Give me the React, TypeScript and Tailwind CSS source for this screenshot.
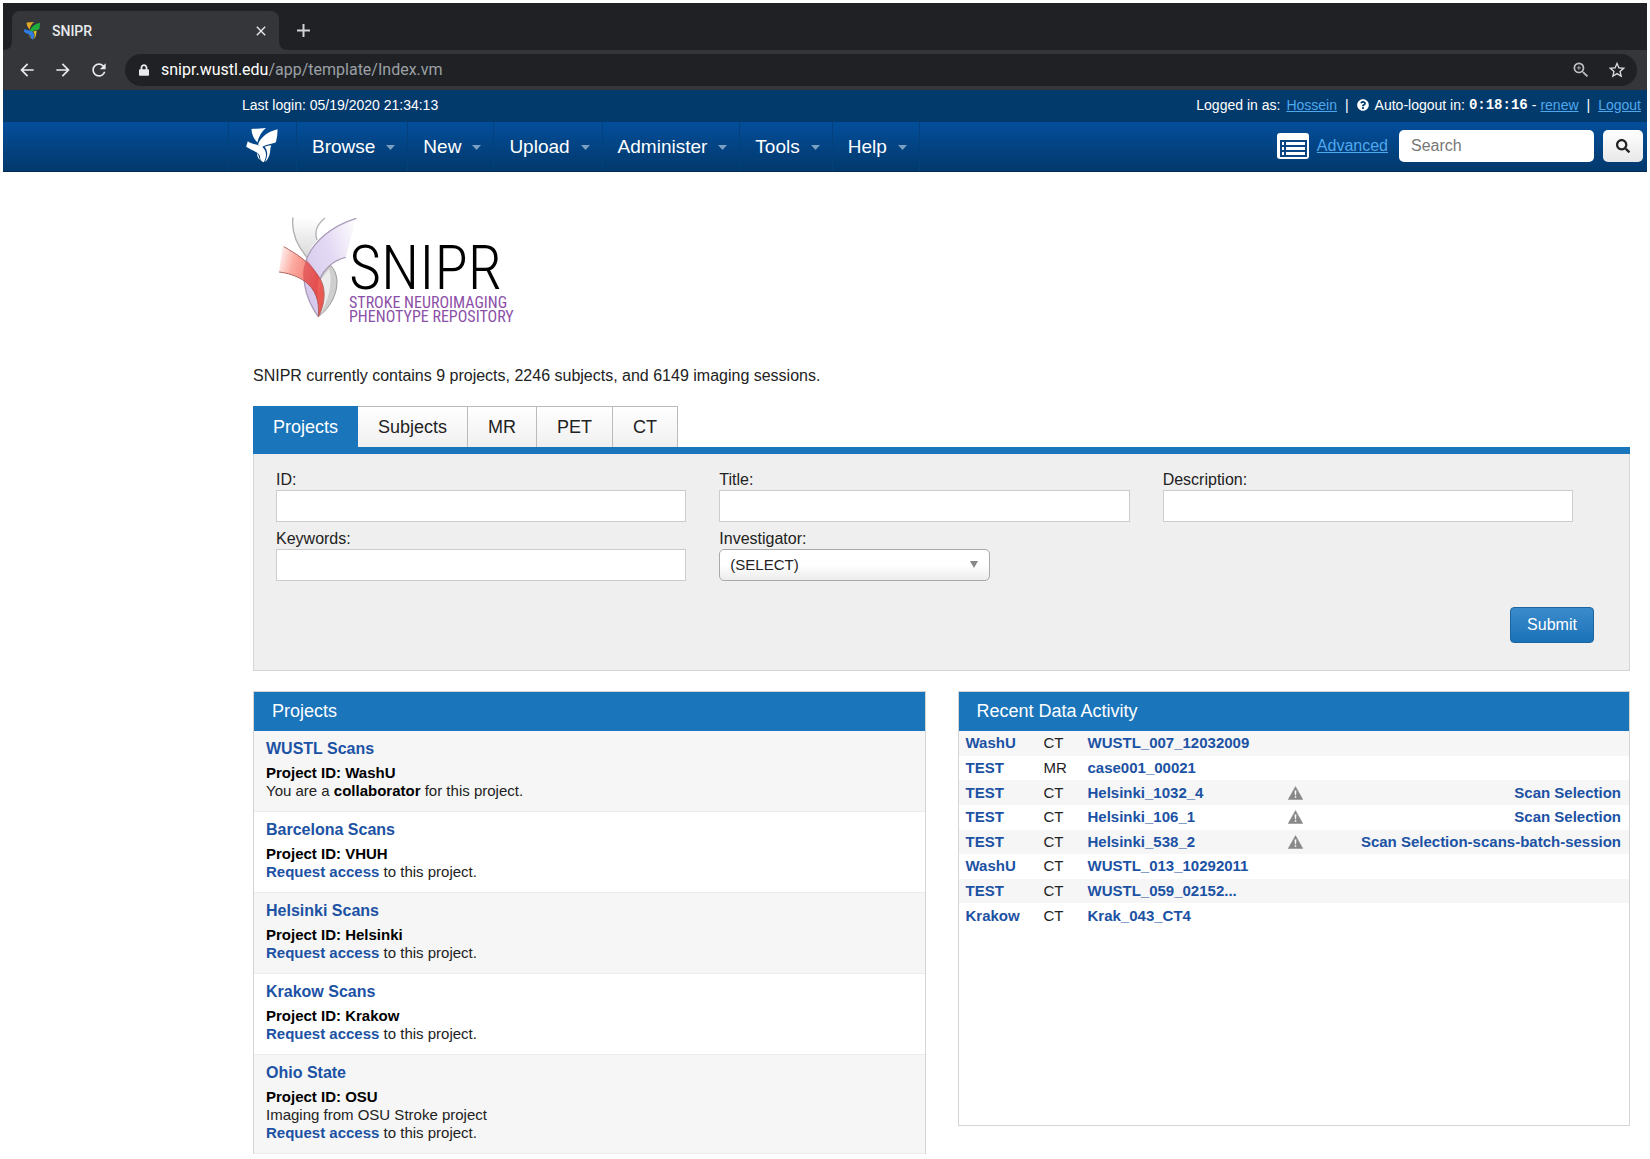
import { ReactNode } from 'react';
import { FaLock, FaQuestionCircle, FaSearch } from 'react-icons/fa';
import { MdArrowBack, MdArrowForward, MdClose, MdRefresh, MdStarBorder, MdZoomIn } from 'react-icons/md';

interface Project {
  title: string;
  id: string;
  description?: string;
  role?: string;
}

interface Activity {
  project: string;
  type: string;
  label: string;
  action?: string;
}

const MENUS = ['Browse', 'New', 'Upload', 'Administer', 'Tools', 'Help'];

const TABS = ['Projects', 'Subjects', 'MR', 'PET', 'CT'];

const PROJECTS: Project[] = [
  { title: 'WUSTL Scans', id: 'WashU', role: 'collaborator' },
  { title: 'Barcelona Scans', id: 'VHUH' },
  { title: 'Helsinki Scans', id: 'Helsinki' },
  { title: 'Krakow Scans', id: 'Krakow' },
  { title: 'Ohio State', id: 'OSU', description: 'Imaging from OSU Stroke project' },
];

const ACTIVITY: Activity[] = [
  { project: 'WashU', type: 'CT', label: 'WUSTL_007_12032009' },
  { project: 'TEST', type: 'MR', label: 'case001_00021' },
  { project: 'TEST', type: 'CT', label: 'Helsinki_1032_4', action: 'Scan Selection' },
  { project: 'TEST', type: 'CT', label: 'Helsinki_106_1', action: 'Scan Selection' },
  { project: 'TEST', type: 'CT', label: 'Helsinki_538_2', action: 'Scan Selection-scans-batch-session' },
  { project: 'WashU', type: 'CT', label: 'WUSTL_013_10292011' },
  { project: 'TEST', type: 'CT', label: 'WUSTL_059_02152...' },
  { project: 'Krakow', type: 'CT', label: 'Krak_043_CT4' },
];

function XnatMark({ className, colors }: { className: string; colors: string[] }) {
  return (
    <svg viewBox="0 0 96 106" className={className} aria-hidden="true">
      <path fill={colors[0]} d="M16 3 C30 2 46 2 60 0 C46 12 38 26 34 44 C22 32 17 18 16 3Z" />
      <path fill={colors[1]} d="M95 4 C70 10 44 26 36 50 L46 60 C58 48 76 50 90 43 C94 30 95 16 95 4Z" />
      <path fill={colors[2]} d="M5 40 C16 50 34 48 50 58 C64 70 62 90 53 104 C46 102 42 96 42 88 C42 74 20 70 0 57Z" />
      <path fill={colors[3]} d="M56 57 C62 53 70 53 76 52 C72 62 74 70 71 80 C68 90 63 98 57 103 C65 88 67 70 56 57Z" />
      <path fill={colors[3]} d="M33 76 C38 80 38 88 42 97 C36 93 33 85 33 76Z" />
    </svg>
  );
}

function SniprMark() {
  return (
    <svg viewBox="84 40 216 320" className="w-[72px] shrink-0 overflow-visible" aria-hidden="true">
      <defs>
        <linearGradient id="petalGray" x1="0" y1="0" x2="0" y2="1">
          <stop offset="0" stopColor="#ffffff" />
          <stop offset="1" stopColor="#d9d9d9" />
        </linearGradient>
        <linearGradient id="petalLilac" x1="1" y1="0" x2="0" y2="0.6">
          <stop offset="0" stopColor="#ffffff" />
          <stop offset="0.5" stopColor="#e0d4f2" />
          <stop offset="1" stopColor="#cfc0ea" />
        </linearGradient>
        <linearGradient id="petalRed" x1="0" y1="0" x2="1" y2="0.4">
          <stop offset="0" stopColor="#ffffff" />
          <stop offset="0.35" stopColor="#fb9c90" />
          <stop offset="1" stopColor="#ee4438" />
        </linearGradient>
      </defs>
      <path d="M132 50 C126 95 142 132 174 170 C181 150 190 134 204 118 C196 95 202 72 228 52Z" fill="url(#petalGray)" />
      <path d="M132 50 C126 95 142 132 174 170 M204 118 C196 95 202 72 228 52" fill="none" stroke="#b0b0b4" strokeWidth="4" />
      <path d="M208 348 C240 324 266 285 264 238 C262 220 256 206 246 195 C228 206 214 222 210 240 C226 270 220 315 208 348Z" fill="#cfcfcf" stroke="#9c9c9c" strokeWidth="3" />
      <path d="M240 206 C252 245 240 300 210 346 C226 300 224 270 212 240Z" fill="#ececec" />
      <path d="M322 53 C250 75 195 120 174 172 C155 220 165 290 208 348 C222 310 224 270 212 238 C222 200 250 180 290 170Z" fill="url(#petalLilac)" fillOpacity="0.85" />
      <path d="M322 53 C250 75 195 120 174 172 C155 220 165 290 208 348 M290 170 C250 180 225 205 212 238" fill="none" stroke="#ab9cba" strokeWidth="4" />
      <path d="M100 138 C140 158 180 182 208 226 C234 262 228 310 208 348 C212 300 200 265 165 240 C140 224 115 217 90 214Z" fill="url(#petalRed)" fillOpacity="0.85" />
      <path d="M104 138 C140 158 180 182 208 226 C234 262 228 310 208 348 C212 300 200 265 165 240 C140 224 115 217 90 214" fill="none" stroke="#b0605c" strokeWidth="3" />
      <path d="M174 178 C160 205 162 225 165 240 C188 256 200 276 206 300 C204 270 206 250 210 230 C200 212 188 194 174 178Z" fill="#d8303a" fillOpacity="0.4" />
    </svg>
  );
}

function ListIcon() {
  return (
    <svg viewBox="0 0 32 26" className="w-8 h-[26px] shrink-0" aria-hidden="true">
      <rect width="32" height="26" rx="3" fill="#fff" />
      <path d="M3 7h27v17H3z" fill="#0a4583" />
      <path d="M5 9h2v3H5zM9 9h19v3H9zM5 14h2v3H5zM9 14h19v3H9zM5 19h2v3H5zM9 19h19v3H9z" fill="#fff" />
    </svg>
  );
}

function WarningIcon() {
  return (
    <svg viewBox="0 0 15 14" className="w-[15px] h-[14px]" role="img" aria-label="Warning">
      <path d="M7.5 0.5 L14.8 13.5 H0.2Z" fill="#888" stroke="#888" strokeWidth="0.5" strokeLinejoin="round" />
      <path d="M6.6 4.6h1.8l-0.3 4.6h-1.2zM6.7 10.2h1.6v1.6h-1.6z" fill="#fff" />
    </svg>
  );
}

function BrowserChrome() {
  return (
    <div className="bg-[#202124] font-['Roboto',sans-serif] text-[#e8eaed]">
      <div className="flex h-[47px] items-end">
        <svg viewBox="0 0 9 9" className="w-[9px] h-[9px]" aria-hidden="true">
          <path d="M9 0 Q9 9 0 9 H9Z" fill="#35363a" />
        </svg>
        <div className="flex items-center w-[267px] h-[39px] px-[10px] rounded-t-lg bg-[#35363a]">
          <XnatMark className="w-5 h-[18px]" colors={['#e0a92a', '#1fae3c', '#2f7de0', '#e3c62d']} />
          <span className="ml-[10px] flex-1 text-sm font-medium">SNIPR</span>
          <button aria-label="Close tab">
            <MdClose className="w-4 h-4" />
          </button>
        </div>
        <svg viewBox="0 0 9 9" className="w-[9px] h-[9px]" aria-hidden="true">
          <path d="M0 0 Q0 9 9 9 H0Z" fill="#35363a" />
        </svg>
        <button aria-label="New tab" className="ml-2 h-10 flex items-center">
          <svg viewBox="0 0 15 15" className="w-[15px] h-[15px]" aria-hidden="true">
            <path d="M7.5 1v13M1 7.5h13" stroke="#d0d2d6" strokeWidth="2" />
          </svg>
        </button>
      </div>
      <div className="flex h-10 items-center bg-[#35363a] pl-[14px] pr-[10px]">
        <button aria-label="Back"><MdArrowBack className="w-5 h-5" /></button>
        <button aria-label="Forward" className="ml-4"><MdArrowForward className="w-5 h-5" /></button>
        <button aria-label="Reload" className="ml-4"><MdRefresh className="w-5 h-5" /></button>
        <div className="ml-4 flex flex-1 h-8 items-center rounded-full bg-[#202124] pl-[14px] pr-[10px] text-base">
          <FaLock className="w-[10px] h-3" />
          <span className="ml-3 text-white">snipr.wustl.edu</span>
          <span className="flex-1 text-[#9aa0a6]">/app/template/Index.vm</span>
          <button aria-label="Zoom"><MdZoomIn className="w-5 h-5 text-[#bdc1c6]" /></button>
          <button aria-label="Bookmark" className="ml-4"><MdStarBorder className="w-5 h-5 text-[#dadce0]" /></button>
        </div>
      </div>
    </div>
  );
}

function TopLink({ children }: { children: ReactNode }) {
  return <a href="#" className="text-[#4fa8ee] underline">{children}</a>;
}

function UserBar() {
  return (
    <div className="flex h-8 items-center justify-between bg-[#033a6c] pl-[239px] pr-1.5 pb-0.5 text-sm text-white">
      <span>Last login: 05/19/2020 21:34:13</span>
      <div className="flex items-center">
        <span className="mr-1.5">Logged in as:</span>
        <TopLink>Hossein</TopLink>
        <span className="mx-2">|</span>
        <FaQuestionCircle className="w-3 h-3 mr-1.5" />
        <span>Auto-logout in:</span>
        <span className="mx-1 font-['Liberation_Mono',monospace] font-bold">0:18:16</span>
        <span className="mr-1">-</span>
        <TopLink>renew</TopLink>
        <span className="mx-2">|</span>
        <TopLink>Logout</TopLink>
      </div>
    </div>
  );
}

function NavBar() {
  return (
    <nav className="flex h-[50px] items-stretch border-b border-[#022c55] bg-linear-to-b from-[#034e9b] to-[#02396c] pl-[225px] pr-1">
      <a href="#" aria-label="Home" className="flex w-[69px] items-center border-x border-[#03407c] pb-0.5 pl-[17px]">
        <XnatMark className="w-8 h-[35px]" colors={['#fff', '#fff', '#fff', '#fff']} />
      </a>
      {MENUS.map((menu) => (
        <button
          key={menu}
          className="flex items-center gap-[11px] border-r border-[#03407c] pl-[15px] pr-3 pt-0.5 text-[19px] text-white"
        >
          {menu}
          <svg viewBox="0 0 9 5" className="w-[9px] h-[5px]" aria-hidden="true">
            <path d="M0 0h9L4.5 5z" fill="#7c9fc4" />
          </svg>
        </button>
      ))}
      <form className="ml-auto flex items-center pb-0.5">
        <ListIcon />
        <a href="#" className="ml-2 mr-[11px] text-base text-[#4fa8ee] underline">Advanced</a>
        <input
          type="text"
          aria-label="Search"
          placeholder="Search"
          className="w-[195px] h-8 rounded-[5px] bg-white px-3 text-base text-black placeholder:text-[#777]"
        />
        <button
          type="button"
          aria-label="Run search"
          className="ml-[9px] flex w-10 h-8 items-center justify-center rounded-[5px] bg-linear-to-b from-white to-[#e8e8e8]"
        >
          <FaSearch className="w-[14px] h-[14px] text-[#222]" />
        </button>
      </form>
    </nav>
  );
}

function SniprLogo() {
  return (
    <div className="flex items-start pl-6">
      <SniprMark />
      <div className="pt-[26px] font-['Roboto_Condensed','Roboto',sans-serif]">
        <div className="text-[62px] leading-14 font-light text-black">SNIPR</div>
        <div className="text-base leading-[14px] text-[#8c4fa8]">
          STROKE NEUROIMAGING
          <br />
          PHENOTYPE REPOSITORY
        </div>
      </div>
    </div>
  );
}

function Field({ id, label }: { id: string; label: string }) {
  return (
    <div>
      <label htmlFor={id} className="block leading-5">{label}</label>
      <input id={id} type="text" className="block w-full h-8 border border-[#ccc] bg-white px-2" />
    </div>
  );
}

function SearchPanel() {
  return (
    <section>
      <div className="flex border-b-[7px] border-[#1a75bb]" role="tablist">
        {TABS.map((tab, i) => (
          <button
            key={tab}
            role="tab"
            aria-selected={i === 0}
            className={
              i === 0
                ? 'h-[41px] bg-[#1a75bb] px-5 text-lg text-white'
                : 'h-[41px] border-t border-r border-[#bbb] bg-linear-to-b from-white to-[#f0f0f0] px-5 text-lg text-[#222]'
            }
          >
            {tab}
          </button>
        ))}
      </div>
      <form className="border border-t-0 border-[#d5d5d5] bg-[#efefef] pt-4 pb-[27px] pl-[22px] text-base text-[#222]">
        <div className="grid grid-cols-3 gap-x-[33px] gap-y-[7px] pr-14">
          <Field id="project-id" label="ID:" />
          <Field id="project-title" label="Title:" />
          <Field id="project-description" label="Description:" />
          <Field id="project-keywords" label="Keywords:" />
          <div>
            <label htmlFor="investigator" className="block leading-5">Investigator:</label>
            <div className="relative w-[271px]">
              <select
                id="investigator"
                className="block w-full h-8 appearance-none rounded-[5px] border border-[#aaa] bg-linear-to-b from-white from-50% to-[#ececec] px-[10px] text-[15px]"
              >
                <option>(SELECT)</option>
              </select>
              <svg viewBox="0 0 8 7" className="pointer-events-none absolute right-3 top-3 w-2 h-[7px]" aria-hidden="true">
                <path d="M0 0h8L4 7z" fill="#888" />
              </svg>
            </div>
          </div>
        </div>
        <div className="mt-[26px] flex justify-end pr-[35px]">
          <button
            type="button"
            className="w-[84px] h-9 rounded-[4px] border border-[#1c65a0] bg-linear-to-b from-[#3a8bcb] to-[#1a72b8] text-base text-white"
          >
            Submit
          </button>
        </div>
      </form>
    </section>
  );
}

function Panel({ title, children, className }: { title: string; children: ReactNode; className: string }) {
  return (
    <section className={`border border-[#d5d5d5] ${className}`}>
      <h2 className="bg-[#1a75bb] pl-[18px] text-lg leading-[39px] text-white">{title}</h2>
      {children}
    </section>
  );
}

function ProjectRow({ project }: { project: Project }) {
  return (
    <li className="border-b border-[#ececec] bg-white pt-2 pb-[11px] pl-3 text-[15px] leading-[18px] text-[#222] odd:bg-[#f6f6f6]">
      <a href="#" className="mb-[5px] block text-base leading-5 font-bold text-[#1c52a4]">{project.title}</a>
      <div className="font-bold text-black">Project ID: {project.id}</div>
      {project.description && <div>{project.description}</div>}
      {project.role ? (
        <div>
          You are a <b className="text-black">{project.role}</b> for this project.
        </div>
      ) : (
        <div>
          <a href="#" className="font-bold text-[#1c52a4]">Request access</a> to this project.
        </div>
      )}
    </li>
  );
}

function ActivityTable() {
  return (
    <table className="w-full h-[197px] table-fixed text-[15px] leading-[18px] text-[#222]">
      <colgroup>
        <col className="w-[85px]" />
        <col className="w-11" />
        <col className="w-[200px]" />
        <col className="w-5" />
        <col />
      </colgroup>
      <tbody>
        {ACTIVITY.map((row) => (
          <tr key={row.label} className="odd:bg-[#f6f6f6]">
            <td className="pl-[7px]"><a href="#" className="font-bold text-[#1c52a4]">{row.project}</a></td>
            <td>{row.type}</td>
            <td><a href="#" className="font-bold text-[#1c52a4]">{row.label}</a></td>
            <td>{row.action && <WarningIcon />}</td>
            <td className="pr-2 text-right">
              {row.action && <a href="#" className="font-bold text-[#1c52a4]">{row.action}</a>}
            </td>
          </tr>
        ))}
      </tbody>
    </table>
  );
}

export default function App() {
  return (
    <div className="bg-white px-[3px] pt-[3px] font-['Liberation_Sans',Arial,sans-serif]">
      <BrowserChrome />
      <UserBar />
      <NavBar />
      <main className="pt-[42px] pl-[250px] pr-[17px]">
        <SniprLogo />
        <p className="mt-10 mb-[18px] text-base leading-6 text-[#222]">
          SNIPR currently contains 9 projects, 2246 subjects, and 6149 imaging sessions.
        </p>
        <SearchPanel />
        <div className="mt-5 grid grid-cols-2 items-start gap-8">
          <Panel title="Projects" className="border-b-0">
            <ul>
              {PROJECTS.map((project) => (
                <ProjectRow key={project.id} project={project} />
              ))}
            </ul>
          </Panel>
          <Panel title="Recent Data Activity" className="min-h-[435px]">
            <ActivityTable />
          </Panel>
        </div>
      </main>
    </div>
  );
}
